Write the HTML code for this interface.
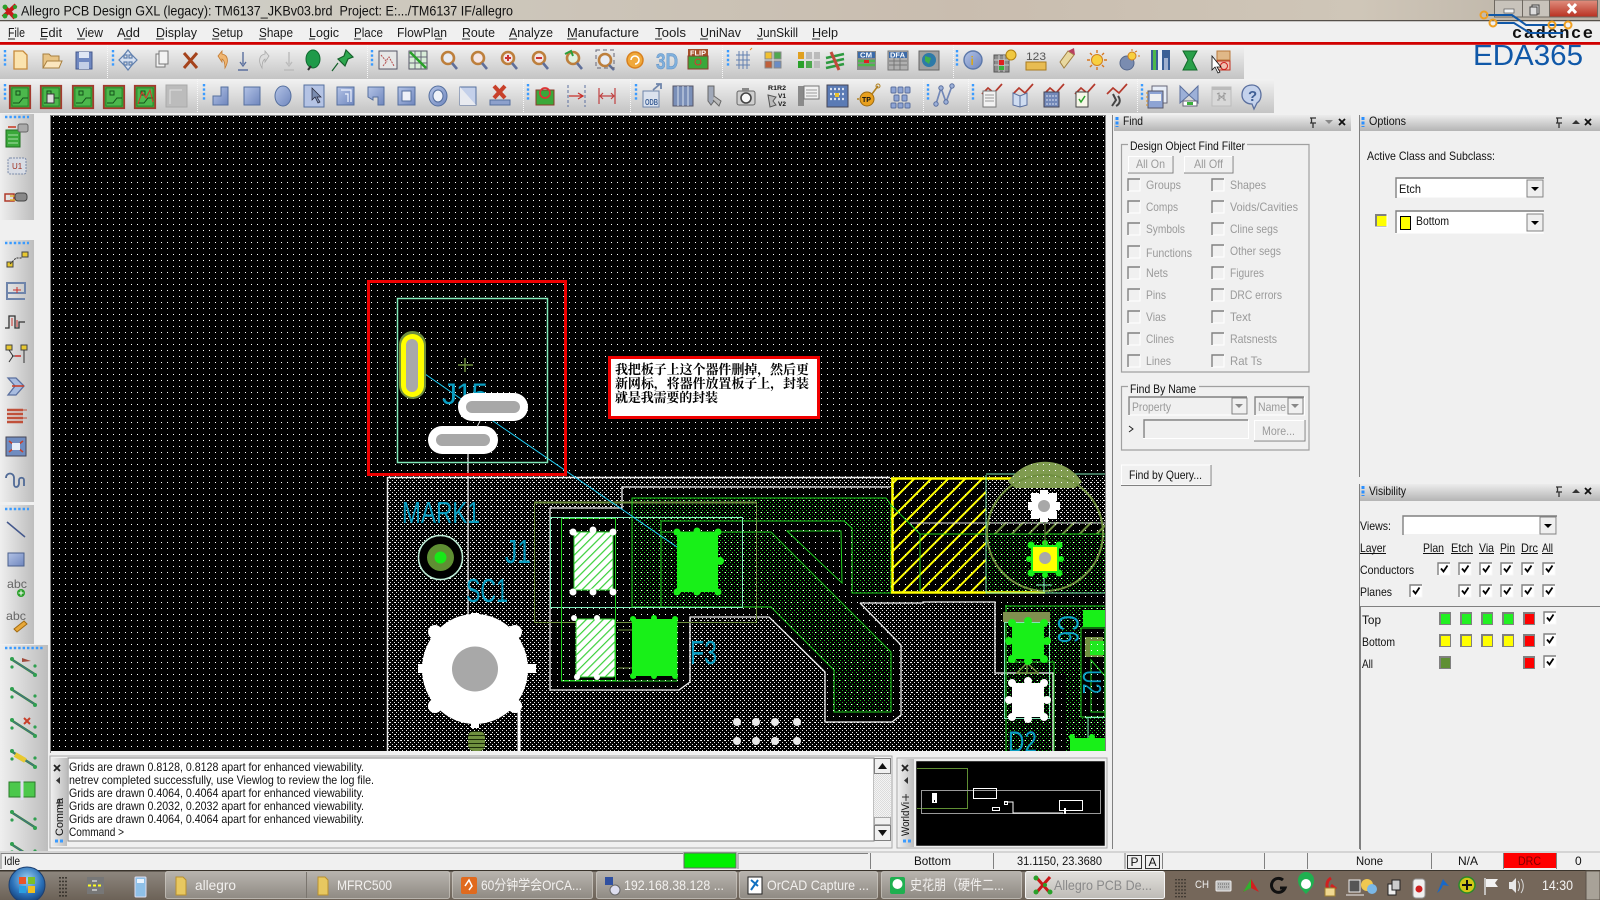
<!DOCTYPE html>
<html lang="en"><head><meta charset="utf-8"><title>Allegro PCB Design GXL</title>
<style>html,body{margin:0;padding:0;background:#f0f0f0;overflow:hidden}svg{display:block}
text{font-family:"Liberation Sans","Noto Sans CJK SC",sans-serif;font-size:12px;fill:#111;white-space:pre}
.d{fill:#9a9a9a}.m{font-size:13px;fill:#1a1a1a}.v{fill:#0a9ec2}.t{font-size:14px;fill:#f2f0ee}</style></head><body>
<svg xmlns="http://www.w3.org/2000/svg" width="1600" height="900" viewBox="0 0 1600 900">
<defs>
<linearGradient id="title" x1="0" x2="1" y1="0" y2="0"><stop offset="0" stop-color="#cfd3d0"/><stop offset=".25" stop-color="#cdc8bd"/><stop offset=".6" stop-color="#c9bdaf"/><stop offset=".85" stop-color="#cfc6b8"/><stop offset="1" stop-color="#b8b0a4"/></linearGradient>
<linearGradient id="tb" x1="0" x2="0" y1="0" y2="1"><stop offset="0" stop-color="#f2f2f2"/><stop offset="1" stop-color="#c4c4c4"/></linearGradient>
<linearGradient id="hd" x1="0" x2="0" y1="0" y2="1"><stop offset="0" stop-color="#ececec"/><stop offset="1" stop-color="#b4b4b4"/></linearGradient>
<linearGradient id="lp" x1="0" x2="1" y1="0" y2="0"><stop offset="0" stop-color="#efefef"/><stop offset="1" stop-color="#bdbdbd"/></linearGradient>
<linearGradient id="bl" x1="0" x2="1" y1="0" y2="1"><stop offset="0" stop-color="#b3c3e6"/><stop offset="1" stop-color="#6f86bd"/></linearGradient>
<linearGradient id="task" x1="0" x2="0" y1="0" y2="1"><stop offset="0" stop-color="#8f8880"/><stop offset="1" stop-color="#6c6257"/></linearGradient>
<linearGradient id="tbtn" x1="0" x2="0" y1="0" y2="1"><stop offset="0" stop-color="#b8b4ae"/><stop offset="1" stop-color="#8f8a83"/></linearGradient>
<linearGradient id="tact" x1="0" x2="0" y1="0" y2="1"><stop offset="0" stop-color="#e2e0dc"/><stop offset="1" stop-color="#bebbb6"/></linearGradient>
<linearGradient id="cl" x1="0" x2="0" y1="0" y2="1"><stop offset="0" stop-color="#e09080"/><stop offset="1" stop-color="#b83020"/></linearGradient>
<radialGradient id="orb" cx=".5" cy=".35" r=".7"><stop offset="0" stop-color="#9fd4f4"/><stop offset=".6" stop-color="#2a70b8"/><stop offset="1" stop-color="#10356a"/></radialGradient>
<pattern id="grid" width="6" height="6" patternUnits="userSpaceOnUse" x="5" y="2"><rect width="1" height="1" fill="#fff"/></pattern>
<pattern id="bd" width="4" height="4" patternUnits="userSpaceOnUse"><rect width="4" height="4" fill="#000"/><rect width="1" height="1" fill="#e8e8e8"/><rect x="2" y="2" width="1" height="1" fill="#e8e8e8"/></pattern>
<pattern id="gd" width="4" height="4" patternUnits="userSpaceOnUse"><rect width="4" height="4" fill="#000"/><rect width="1" height="1" fill="#22bc22"/><rect x="2" y="2" width="1" height="1" fill="#22bc22"/></pattern>
<pattern id="hy" width="12" height="12" patternUnits="userSpaceOnUse" patternTransform="rotate(-45)"><rect width="12" height="12" fill="#000"/><rect width="12" height="2" fill="#ffff00"/></pattern>
<pattern id="ho" width="12" height="12" patternUnits="userSpaceOnUse" patternTransform="rotate(-45)"><rect width="12" height="2" fill="#6f8f3f"/></pattern>
<pattern id="hz" width="4" height="4" patternUnits="userSpaceOnUse"><rect width="4" height="4" fill="#6f8f3f"/><rect y="3" width="4" height="1" fill="#1a2a08"/></pattern>
<pattern id="hg" width="6" height="6" patternUnits="userSpaceOnUse" patternTransform="rotate(-45)"><rect width="6" height="6" fill="#fff"/><rect width="6" height="1.2" fill="#39d039"/></pattern>
<pattern id="sc" width="2" height="2" patternUnits="userSpaceOnUse"><rect width="2" height="2" fill="#f4f4f4"/><rect width="1" height="1" fill="#dcdcdc"/><rect x="1" y="1" width="1" height="1" fill="#dcdcdc"/></pattern>
<symbol id="cbd" width="12" height="12" overflow="visible"><rect width="12" height="12" fill="#f0f0f0" stroke="#fff"/><path d="M0 12V0H12" fill="none" stroke="#808080" stroke-width="1.4"/></symbol>
<symbol id="cb" width="12" height="12" overflow="visible"><rect width="12" height="12" fill="#fff" stroke="#f8f8f8"/><path d="M0 12V0H12" fill="none" stroke="#808080" stroke-width="1.4"/><path d="M3 5.500l2.500 3 4-6" fill="none" stroke="#000" stroke-width="1.800"/></symbol>
<symbol id="dn" width="17" height="18" overflow="visible"><rect width="16" height="17" fill="#efefef" stroke="#808080"/><path d="M4 7h8l-4 4z" fill="#000"/></symbol>
<symbol id="hi" width="40" height="12" overflow="visible"><path d="M3 1h6M4.500 1v5M3 6h6M6 6v5" stroke="#333" stroke-width="1.300" fill="none"/><path d="M19 7h8l-4-4z" fill="#333"/><path d="M32 2l6 6M38 2l-6 6" stroke="#111" stroke-width="1.800"/></symbol>
<symbol id="hf" width="40" height="12" overflow="visible"><path d="M3 1h6M4.500 1v5M3 6h6M6 6v5" stroke="#333" stroke-width="1.300" fill="none"/><path d="M18 3h8l-4 4z" fill="#888"/><path d="M32 2l6 6M38 2l-6 6" stroke="#111" stroke-width="1.800"/></symbol>
<symbol id="pcb" width="22" height="24" overflow="visible"><rect x=".8" y=".8" width="20.400" height="22.400" fill="#3aa83a" stroke="#a33a2e" stroke-width="1.800"/><rect x="3" y="3" width="16" height="18" fill="#4cb84c" stroke="#1f6f1f" stroke-width=".6"/><path d="M4 18h6l4-5h5M7 6h4v4h-4z" stroke="#14501a" fill="none"/></symbol>
<symbol id="cur" width="24" height="26" overflow="visible"><path d="M2 14l6-6 6 5 8-9" fill="none" stroke="#b4392c" stroke-width="1.700"/></symbol>
<symbol id="lw" width="32" height="22" overflow="visible"><path d="M3 4l25 16" stroke="#3a8f3a" stroke-width="2.500"/><path d="M3 4l25 16" stroke="#45679b" stroke-width="1"/><circle cx="4" cy="4" r="2" fill="#2f9f4f"/><circle cx="4" cy="12" r="1.600" fill="#2f9f4f"/><circle cx="27" cy="20" r="2" fill="#2f9f4f"/><circle cx="27" cy="11" r="1.600" fill="#2f9f4f"/></symbol>
</defs>

<rect width="1600" height="900" fill="#f0f0f0"/>

<!-- Title bar -->
<rect width="1600" height="20" fill="url(#title)"/>
<rect y="20" width="1600" height="1.400" fill="#55504a"/>
<rect y="21.400" width="1600" height="1" fill="#fff"/>
<g transform="translate(2,3)"><path d="M1 14L14 2M2 3l11 12" stroke="#c81818" stroke-width="4"/><circle cx="3" cy="4" r="2.400" fill="#2aa02a"/><circle cx="13" cy="13" r="2.400" fill="#2aa02a"/><circle cx="3" cy="13" r="2.400" fill="#2aa02a"/><circle cx="13" cy="4" r="2" fill="#2aa02a"/></g>
<text x="21" y="15.500" textLength="492" lengthAdjust="spacingAndGlyphs" style="font-size:14px">Allegro PCB Design GXL (legacy): TM6137_JKBv03.brd  Project: E:.../TM6137 IF/allegro</text>
<rect x="1494.500" y="0" width="28" height="17" fill="#c8c3bb" stroke="#6e6860"/><rect x="1522.500" y="0" width="27" height="17" fill="#c8c3bb" stroke="#6e6860"/><rect x="1549.500" y="0" width="48" height="17" fill="url(#cl)" stroke="#6e6860"/>
<rect x="1504" y="9" width="10" height="4" fill="#f4f4f4" stroke="#555" stroke-width=".7"/>
<rect x="1532" y="5" width="7" height="9" fill="#ddd" stroke="#444"/><rect x="1530" y="7" width="7" height="8" fill="#ddd" stroke="#444"/>
<path d="M1568 4l8 9M1576 4l-8 9" stroke="#fff" stroke-width="3"/>

<!-- Menu -->
<rect y="22" width="1600" height="20" fill="#f0f0f0"/>
<g>
<text class="m" x="8" y="37" textLength="17" lengthAdjust="spacingAndGlyphs">File</text>
<text class="m" x="40" y="37" textLength="22" lengthAdjust="spacingAndGlyphs">Edit</text>
<text class="m" x="77" y="37" textLength="26" lengthAdjust="spacingAndGlyphs">View</text>
<text class="m" x="117" y="37" textLength="23" lengthAdjust="spacingAndGlyphs">Add</text>
<text class="m" x="156" y="37" textLength="41" lengthAdjust="spacingAndGlyphs">Display</text>
<text class="m" x="212" y="37" textLength="31" lengthAdjust="spacingAndGlyphs">Setup</text>
<text class="m" x="259" y="37" textLength="34" lengthAdjust="spacingAndGlyphs">Shape</text>
<text class="m" x="309" y="37" textLength="30" lengthAdjust="spacingAndGlyphs">Logic</text>
<text class="m" x="354" y="37" textLength="29" lengthAdjust="spacingAndGlyphs">Place</text>
<text class="m" x="397" y="37" textLength="50" lengthAdjust="spacingAndGlyphs">FlowPlan</text>
<text class="m" x="462" y="37" textLength="33" lengthAdjust="spacingAndGlyphs">Route</text>
<text class="m" x="509" y="37" textLength="44" lengthAdjust="spacingAndGlyphs">Analyze</text>
<text class="m" x="567" y="37" textLength="72" lengthAdjust="spacingAndGlyphs">Manufacture</text>
<text class="m" x="655" y="37" textLength="31" lengthAdjust="spacingAndGlyphs">Tools</text>
<text class="m" x="700" y="37" textLength="41" lengthAdjust="spacingAndGlyphs">UniNav</text>
<text class="m" x="757" y="37" textLength="41" lengthAdjust="spacingAndGlyphs">JunSkill</text>
<text class="m" x="812" y="37" textLength="26" lengthAdjust="spacingAndGlyphs">Help</text>
<path d="M8 39h7M40 39h7M77 39h8M124 39h7M156 39h8M212 39h7M259 39h7M309 39h6M354 39h7M435 39h7M462 39h8M509 39h8M567 39h10M655 39h7M700 39h8M757 39h6M812 39h8" stroke="#222"/>
</g>
<rect y="42" width="1600" height="2.800" fill="#d00000"/>

<!-- Toolbars -->
<rect x="0" y="45" width="1244" height="34" fill="url(#tb)"/>
<rect x="0" y="79" width="1274" height="34" fill="url(#tb)"/>
<path d="M107.500 45v34M367.500 45v34M722.500 45v34M953.500 45v34M197.500 79v34M523.500 79v34M630.500 79v34M923.500 79v34M968.500 79v34M1137.500 79v34" stroke="#f8f8f8" stroke-dasharray="1 1"/>
<path d="M5 50v17M113 50v17M372 50v17M728 50v17M957 50v17M5 84v17M204 84v17M528 84v17M636 84v17M928 84v17M973 84v17M1142 84v17" stroke="#3a9bff" stroke-width="2.400" stroke-dasharray="2.400 2"/>

<!-- row 1 icons -->
<path d="M14 51h9l4 4v14H14z" fill="#fbe3ae" stroke="#c68a3c" stroke-width="1.300"/>
<path d="M43 68V54h6l2 2h8v12z" fill="#e8c486" stroke="#a88040"/><path d="M43 68l4-7h15l-3 7z" fill="#fbe6be" stroke="#a88040"/>
<path d="M76 52h16v17H76z" fill="#7088c0" stroke="#44588c"/><rect x="79" y="52" width="10" height="6" fill="#dfe6f4"/><rect x="79" y="62" width="10" height="7" fill="#c4cfe6"/>
<path d="M128 50l4 5h-3v3h3v-3l5 5-5 5v-3h-3v3h3l-4 5-4-5h3v-3h-3v3l-5-5 5-5v3h3v-3h-3z" fill="#d6e0f0" stroke="#5f7fae" stroke-width="1.200"/>
<rect x="156" y="54" width="9" height="13" fill="#f2f2f2" stroke="#777"/><rect x="159" y="51" width="9" height="13" fill="#f2f2f2" stroke="#777"/>
<path d="M184 53l13 15M197 53l-13 15" stroke="#a5431c" stroke-width="3"/>
<path d="M218 56l4-5v3c6 1 7 7 3 14-0-5-1-8-3-9v3z" fill="#f0b672" stroke="#c37a30" stroke-width=".8"/>
<path d="M243 52v12M240 62l3 4 3-4M238 70h10" stroke="#5a6f9e" stroke-width="1.400" fill="none"/>
<path d="M269 56l-4-5v3c-6 1-7 7-3 14 0-5 1-8 3-9v3z" fill="#ddd" stroke="#aaa" stroke-width=".8"/>
<path d="M289 52v12M286 62l3 4 3-4M284 70h10" stroke="#bbb" stroke-width="1.400" fill="none"/>
<ellipse cx="313" cy="59" rx="7" ry="9" fill="#1f9a4a" stroke="#0f6a2f"/><path d="M308 70l3-4" stroke="#333" stroke-width="2"/>
<path d="M346 50l7 7-5 2-3 7-7-7 6-3zM338 63l-6 8" fill="#2ea84f" stroke="#14602a" stroke-width="1.200"/>
<rect x="379" y="51" width="18" height="18" fill="#e6e6e6" stroke="#556"/><path d="M381 55l5 6 3-4 5 9M383 66l4-5" stroke="#b45050" fill="none" stroke-dasharray="2 1"/>
<rect x="409" y="51" width="18" height="18" fill="#d8ecd8" stroke="#556"/><path d="M409 57h18M409 63h18M415 51v18M421 51v18" stroke="#667"/><path d="M410 52l16 16" stroke="#28a028" stroke-width="2.500"/>
<g fill="none" stroke-width="2.600"><circle cx="448" cy="58" r="6" fill="#e8ecf4" stroke="#bd7f3c"/><path d="M452 63l5 6" stroke="#5f6f9a"/><circle cx="478" cy="58" r="6" fill="#f4e6e6" stroke="#bd7f3c"/><path d="M482 63l5 6" stroke="#5f6f9a"/><circle cx="508" cy="58" r="6" fill="#f4e6e6" stroke="#bd7f3c"/><path d="M512 63l5 6" stroke="#5f6f9a"/><circle cx="539" cy="58" r="6" fill="#f4e6e6" stroke="#bd7f3c"/><path d="M543 63l5 6" stroke="#5f6f9a"/><circle cx="573" cy="58" r="6" fill="#dff0df" stroke="#bd7f3c"/><path d="M577 63l5 6" stroke="#5f6f9a"/><circle cx="605" cy="60" r="6" fill="#e8ecf4" stroke="#bd7f3c"/><path d="M609 65l5 5" stroke="#5f6f9a"/></g>
<path d="M505 58h6M508 55v6" stroke="#c33" stroke-width="2"/><path d="M536 58h6" stroke="#c33" stroke-width="2"/><path d="M565 54l6-3 2 5" fill="none" stroke="#2a9f3a" stroke-width="2"/>
<rect x="596" y="50" width="18" height="18" fill="none" stroke="#667" stroke-dasharray="4 3"/>
<circle cx="635" cy="60" r="8" fill="#f0a83a" stroke="#d8801e" stroke-width="1.500"/><path d="M631 60a4 4 0 1 1 4 4" fill="none" stroke="#fff" stroke-width="1.600"/>
<text x="656" y="69" textLength="22" lengthAdjust="spacingAndGlyphs" style="font-size:22px;font-weight:bold;fill:#7fb0dc;stroke:#5f8fc4;stroke-width:.5">3D</text>
<rect x="688" y="49" width="20" height="7" fill="#a5502a"/><text x="690" y="55.500" textLength="16" lengthAdjust="spacingAndGlyphs" style="font-size:7px;font-weight:bold;fill:#fff">FLIP</text><rect x="688" y="56" width="20" height="13" fill="#3aa83a" stroke="#8a3a2a"/><circle cx="698" cy="62" r="3" fill="none" stroke="#d33"/>
<g stroke="#6280b0" fill="none"><path d="M736 55h14M736 60h14M736 65h14M739 51v18M743 51v18M747 51v18"/></g><path d="M750 50l2-2" stroke="#e88a2a"/>
<rect x="765" y="52" width="7" height="7" fill="#f0c030" stroke="#888"/><rect x="774" y="52" width="7" height="7" fill="#4fa84f" stroke="#888"/><rect x="765" y="61" width="7" height="7" fill="#c0603a" stroke="#888"/><rect x="774" y="61" width="7" height="7" fill="#6a8cc4" stroke="#888"/>
<rect x="798" y="52" width="6" height="7" fill="#e0a020"/><rect x="806" y="52" width="6" height="7" fill="#bbb"/><rect x="814" y="52" width="6" height="7" fill="#bbb"/><rect x="798" y="61" width="6" height="7" fill="#2aa02a"/><rect x="806" y="61" width="6" height="7" fill="#4fa84f"/><rect x="814" y="61" width="6" height="7" fill="#bbb"/>
<path d="M826 58l18-4M826 63l18-4M826 68l18-4" stroke="#2d9a3f" stroke-width="2.600"/><path d="M831 52l8 18" stroke="#c14a3a" stroke-width="3"/>
<rect x="857" y="51" width="19" height="19" fill="#8a8a8a"/><rect x="858" y="52" width="17" height="6" fill="#3b6aa8"/><text x="860" y="57.500" textLength="12" lengthAdjust="spacingAndGlyphs" style="font-size:7px;font-weight:bold;fill:#fff">CM</text><path d="M858 61h17M858 65h17" stroke="#4cb84c" stroke-width="2.500"/><rect x="864" y="60" width="5" height="3" fill="#e02020"/>
<rect x="888" y="51" width="20" height="19" fill="#b0b0b0" stroke="#777"/><rect x="889" y="52" width="18" height="6" fill="#3b6aa8"/><text x="890" y="57.500" textLength="15" lengthAdjust="spacingAndGlyphs" style="font-size:7px;font-weight:bold;fill:#fff">DFA</text><path d="M889 61h18M889 65h18M894 58v12M900 58v12" stroke="#777"/>
<rect x="919" y="51" width="20" height="19" fill="#a0a0a0" stroke="#666"/><circle cx="929" cy="60" r="7" fill="#2d7aa8"/><path d="M925 56l6 2-2 6-4-3z" fill="#3fb04a"/>
<circle cx="973" cy="60" r="9" fill="url(#bl)" stroke="#5c78aa" stroke-width="1.400"/><text x="970.500" y="65" style="font-size:12px;font-weight:bold;fill:#d8a820">i</text>
<rect x="994" y="55" width="15" height="17" fill="#8c8c8c" stroke="#555"/><path d="M994 60h15M994 65h15M999 55v17M1004 55v17" stroke="#ccc"/><rect x="999" y="60" width="5" height="5" fill="#e02020"/><rect x="999" y="66" width="5" height="4" fill="#3ab03a"/><circle cx="1011" cy="55" r="5" fill="#f0c840" stroke="#b08010"/>
<text x="1026" y="60" textLength="20" lengthAdjust="spacingAndGlyphs" style="font-size:11px;fill:#555">123</text><rect x="1026" y="62" width="20" height="8" fill="#e8bc52" stroke="#a87a1e"/>
<path d="M1060 62l8-11 6 4-10 13z" fill="#e8d8a0" stroke="#a08040"/><path d="M1068 51l6-3 1 7z" fill="#b84060"/>
<circle cx="1097" cy="60" r="5.500" fill="#f8d040" stroke="#d08020"/><path d="M1097 50v3M1097 67v3M1087 60h3M1104 60h3M1090 53l2 2M1102 65l2 2M1104 53l-2 2M1090 67l2-2" stroke="#d8761e" stroke-width="1.400"/>
<circle cx="1127" cy="63" r="7" fill="#7a8cb0" stroke="#55678c"/><circle cx="1132" cy="56" r="4" fill="#f8d040" stroke="#d08020"/><path d="M1132 49v2M1138 56h2M1137 51l-2 1" stroke="#d8761e"/>
<rect x="1151" y="50" width="19" height="20" fill="#3a5f96"/><rect x="1153" y="50" width="3" height="20" fill="#4cb84c"/><rect x="1158" y="50" width="4" height="20" fill="#e8eef8"/><rect x="1164" y="58" width="4" height="12" fill="#9fb0d0"/>
<path d="M1183 51h14l-5 9 5 10h-14l5-10z" fill="#2a9f4a" stroke="#12682a"/>
<rect x="1217" y="51" width="13" height="9" fill="#e0b888" stroke="#b8783c"/><rect x="1217" y="61" width="13" height="9" fill="#f0c0b0" stroke="#c03020"/><circle cx="1224" cy="66" r="3.500" fill="none" stroke="#d02020"/><path d="M1212 56v14l3-3 3 6 2-1-3-5h4z" fill="#fff" stroke="#111" stroke-width=".8"/>

<!-- row 2 icons -->
<use href="#pcb" x="9" y="85"/><use href="#pcb" x="40" y="85"/><use href="#pcb" x="72" y="85"/><use href="#pcb" x="103" y="85"/><use href="#pcb" x="134" y="85"/>
<rect x="47" y="94" width="7" height="9" fill="#ddd" stroke="#333"/>
<path d="M138 104l4-12 4 6 4-8 3 12" stroke="#d8302a" fill="none"/>
<rect x="166" y="85" width="21" height="22" fill="#bcbcbc" stroke="#aaa"/><path d="M170 104V90h12" stroke="#e0e0e0" fill="none"/>
<g fill="url(#bl)" stroke="#556f9e">
<path d="M213 105V96h8v-9h7v18z"/><rect x="244" y="87" width="16" height="18"/><ellipse cx="283" cy="96" rx="8" ry="10"/>
<rect x="304" y="85" width="20" height="22" fill="#b4c3e4"/>
<rect x="337" y="87" width="17" height="18"/><path d="M368 87h16v18h-6v-8h-5v3l-5-3z"/><rect x="398" y="87" width="17" height="18"/><ellipse cx="438" cy="96" rx="9" ry="10"/>
<path d="M460 87h16v18h-16z" fill="#c4d0ea"/><path d="M460 87l16 18h-16z" fill="#e8eaf0" stroke="none"/></g>
<path d="M312 88v12l3-3 3 6 2-1-3-5h4z" fill="#7a8cb0" stroke="#223" stroke-width=".7"/>
<path d="M341 90h10v12M345 94h3v8" fill="none" stroke="#f0f4ff" stroke-width="1.200"/>
<rect x="402" y="91" width="9" height="10" fill="#eef1f8" stroke="#556f9e"/><ellipse cx="438" cy="96" rx="5" ry="6" fill="#eef1f8" stroke="#556f9e"/>
<rect x="490" y="100" width="20" height="5" fill="#8da0cc" stroke="#556f9e"/><path d="M494 86l11 12M505 86l-11 12" stroke="#c8402a" stroke-width="4"/>
<rect x="536" y="90" width="18" height="15" fill="#3aa83a" stroke="#8a3a2a"/><circle cx="545" cy="93" r="5" fill="none" stroke="#d33" stroke-width="1.800"/>
<path d="M568 85v22" stroke="#5a6f9e" stroke-dasharray="3 2"/><path d="M569 96h14M578 93l5 3-5 3" stroke="#c8302a" fill="none" stroke-width="1.300"/><path d="M585 85v22" stroke="#5a6f9e" stroke-dasharray="3 2"/>
<path d="M599 88v16M615 88v16M600 96h14M603 93l-3 3 3 3M611 93l3 3-3 3" stroke="#c04040" fill="none" stroke-width="1.200"/>
<rect x="643" y="91" width="16" height="16" fill="#dbe2ee" stroke="#6f85ab"/><text x="645" y="105" textLength="13" lengthAdjust="spacingAndGlyphs" style="font-size:8px;font-weight:bold;fill:#3b5f96">ODB</text><path d="M653 90l7-6M656 84h5v5" stroke="#6f85ab" stroke-width="1.800" fill="none"/>
<rect x="673" y="86" width="20" height="20" fill="#7a8fb8" stroke="#556"/><path d="M678 86v20M683 86v20M688 86v20" stroke="#d8e0ee"/>
<path d="M708 86v15l3 4 3-4V86z" fill="#a0a8b8" stroke="#666"/><path d="M714 96l7 5-2 5-6-6" fill="#bbb" stroke="#666"/>
<rect x="737" y="91" width="18" height="14" rx="2" fill="#cfcfcf" stroke="#666"/><circle cx="746" cy="98" r="5" fill="#f8f8f8" stroke="#444" stroke-width="1.600"/><rect x="742" y="88" width="7" height="3" fill="#888"/>
<text x="768" y="90" textLength="18" lengthAdjust="spacingAndGlyphs" style="font-size:6.500px;font-weight:bold">R1R2</text><text x="778" y="98" style="font-size:6.500px;font-weight:bold">V1</text><text x="778" y="106" style="font-size:6.500px;font-weight:bold">V2</text><path d="M768 95l8 2-3 4 3 4-6 2z" fill="#bbb" stroke="#555"/>
<rect x="798" y="86" width="6" height="20" fill="#8a8a8a"/><rect x="804" y="86" width="15" height="13" fill="#f2f2f2" stroke="#777"/><path d="M806 90h11M806 93h11M806 96h11" stroke="#999"/>
<rect x="827" y="85" width="21" height="22" fill="#5b7bb5" stroke="#445"/><path d="M830 89h2M834 89h2M838 89h2M842 89h2M830 94h2M834 94h2M838 94h2M842 94h2M830 99h2M834 99h2M838 99h2M842 99h2" stroke="#d8e0f0" stroke-width="2.200"/><rect x="835" y="93" width="4" height="4" fill="#e8c030"/>
<circle cx="867" cy="99" r="7" fill="#e8a01e" stroke="#9c6a10"/><text x="862" y="102" style="font-size:7px;font-weight:bold">TP</text><path d="M872 94l6-8M859 99h-2" stroke="#b08020" stroke-width="1.500"/><circle cx="878" cy="86" r="2" fill="none" stroke="#b08020"/>
<g fill="#8ea4d4" stroke="#5a6f9e"><rect x="891" y="87" width="5" height="6" rx="1"/><rect x="898" y="87" width="5" height="6" rx="1"/><rect x="905" y="87" width="5" height="6" rx="1"/><rect x="894" y="95" width="5" height="6" rx="1"/><rect x="902" y="95" width="5" height="6" rx="1"/><rect x="891" y="103" width="5" height="5" rx="1"/><rect x="898" y="103" width="5" height="5" rx="1"/><rect x="905" y="103" width="5" height="5" rx="1"/></g>
<path d="M936 104l5-16 5 14 6-16" fill="none" stroke="#7288b8" stroke-width="1.700"/><g fill="#9cb0d8" stroke="#5a6f9e"><circle cx="936" cy="104" r="2.200"/><circle cx="941" cy="88" r="2.200"/><circle cx="946" cy="102" r="2.200"/><circle cx="952" cy="86" r="2.200"/></g>
<use href="#cur" x="980" y="80"/><rect x="983" y="91" width="13" height="16" fill="#f2f2f2" stroke="#777"/><path d="M985 95h9M985 98h9M985 101h9" stroke="#999"/>
<use href="#cur" x="1011" y="80"/><path d="M1013 93l7 3 7-3v12l-7 2-7-2z" fill="#cfdcf0" stroke="#5a6f9e"/><path d="M1020 96v11" stroke="#5a6f9e"/>
<use href="#cur" x="1042" y="80"/><rect x="1044" y="92" width="15" height="15" fill="#7288b8" stroke="#445"/><path d="M1046 96h11M1046 100h11M1046 104h11" stroke="#d8e0f0" stroke-dasharray="2 1"/>
<use href="#cur" x="1073" y="80"/><rect x="1076" y="92" width="12" height="15" fill="#f6f6e8" stroke="#444"/><path d="M1079 99l2 3 4-6" stroke="#2aa02a" fill="none" stroke-width="1.500"/>
<use href="#cur" x="1105" y="80"/><path d="M1113 94l3 6-4 6M1118 96c3 4 2 8-2 10" stroke="#444" stroke-width="2" fill="none"/>
<rect x="1152" y="86" width="15" height="17" fill="#e8eef8" stroke="#667"/><rect x="1148" y="91" width="15" height="17" fill="#8ea4d4" stroke="#556"/><rect x="1150" y="94" width="11" height="7" fill="#f0f0f0"/><path d="M1148 93h-2M1148 97h-2M1148 101h-2M1148 105h-2" stroke="#d89020"/>
<path d="M1180 86l9 9 9-9v17l-9-8-9 8z" fill="#9cb0d8" stroke="#5a6f9e"/><rect x="1183" y="101" width="14" height="5" fill="#fff" stroke="#667"/><rect x="1187" y="102" width="6" height="3" fill="#3ab03a"/>
<rect x="1212" y="87" width="19" height="19" fill="#d8d8d8" stroke="#bbb"/><rect x="1212" y="87" width="19" height="3" fill="#bbb"/><path d="M1217 94l2-1v7h-2M1226 94l-2-1v7h2M1219 95l5 4M1224 95l-5 4" stroke="#999" fill="none"/>
<path d="M1252 85c-8 0-10 6-10 10s3 9 10 9l2 5 3-6c3-2 4-5 4-8 0-5-3-10-9-10z" fill="#c4d2ec" stroke="#5a6f9e" stroke-width="1.300"/><text x="1248" y="101" style="font-size:15px;font-weight:bold;fill:#3f5f96">?</text>

<!-- cadence logo -->
<text x="1512" y="38" textLength="81" lengthAdjust="spacing" style="font-size:17px;font-weight:bold;font-family:'Liberation Mono',monospace;fill:#111">cadence</text>
<path d="M1486 15h26l14 10h39M1496 23h18l16 10h33" fill="none" stroke="#1058a8" stroke-width="2"/>
<g fill="none" stroke="#f0a020" stroke-width="2"><circle cx="1484" cy="15" r="3.500"/><circle cx="1493" cy="23" r="3.500"/><circle cx="1552" cy="25" r="3.500"/><circle cx="1568" cy="25" r="3.500"/></g>
<text x="1473" y="65" textLength="110" lengthAdjust="spacingAndGlyphs" style="font-size:29px;fill:#1058a8">EDA365</text>

<!-- left toolstrip panels -->
<rect x="0" y="114" width="34" height="106" fill="url(#lp)"/><rect x="0" y="240" width="34" height="262" fill="url(#lp)"/><rect x="0" y="505" width="34" height="139" fill="url(#lp)"/><rect x="0" y="645" width="48" height="207" fill="url(#lp)"/>
<path d="M5 117h24M5 243h24M5 509h24M5 648h38" stroke="#3a9bff" stroke-width="2.400" stroke-dasharray="2.400 2"/>
<!-- panel 1 -->
<rect x="6" y="130" width="14" height="17" fill="#3aa83a" stroke="#1f6f1f"/><path d="M8 135h10M8 139h10M8 143h10" stroke="#a8e0a8"/><rect x="18" y="124" width="10" height="8" rx="2" fill="#aaa" stroke="#666"/><path d="M8 127h8" stroke="#c8402a" stroke-width="1.600"/>
<rect x="8" y="158" width="18" height="16" rx="2" fill="#d8dce4" stroke="#7a8aa8" stroke-dasharray="2 1"/><text x="12" y="169" style="font-size:8px;fill:#a03020">U1</text>
<rect x="5" y="194" width="9" height="7" fill="none" stroke="#b03a2a" stroke-width="1.500"/><path d="M10 196h6M10 200h6" stroke="#e0b030" stroke-width="1.500"/><rect x="15" y="193" width="12" height="8" rx="3" fill="#888" stroke="#444"/>
<!-- panel 2 -->
<rect x="7" y="262" width="6" height="5" fill="#e8c830" stroke="#444"/><rect x="22" y="252" width="6" height="5" fill="#e8c830" stroke="#444"/><path d="M10 264l6-6h6" stroke="#333" stroke-dasharray="2 1" fill="none"/>
<path d="M7 283h18v10H7zM7 283v16h18" fill="none" stroke="#6f85ab" stroke-width="2"/><path d="M13 290h8M17 287v6" stroke="#c8302a"/>
<path d="M5 328h4v-12h6v12h4v-6h6" fill="none" stroke="#333" stroke-width="1.300"/><path d="M12 326v-8M17 320v7" stroke="#c8302a"/>
<rect x="6" y="345" width="6" height="5" fill="#e8c830" stroke="#444"/><rect x="21" y="345" width="6" height="5" fill="#e8c830" stroke="#444"/><path d="M9 350l4 6-4 6M12 356h9M24 350v13" stroke="#333" fill="none"/><path d="M15 356h6" stroke="#c8302a" stroke-width="1.500"/>
<path d="M8 378h8l8 8-8 9H8l7-9z" fill="#a8bce0" stroke="#5a6f9e" stroke-width="1.300"/><path d="M12 386h12" stroke="#c8402a" stroke-width="1.600"/>
<path d="M7 410h16M7 414h16M7 418h16M7 422h16" stroke="#c0503a" stroke-width="2.400"/><path d="M23 410h4M23 418h4" stroke="#c0503a"/>
<rect x="6" y="437" width="20" height="19" fill="#6f8cc0" stroke="#445"/><path d="M9 441l14 11M23 441l-14 11" stroke="#c8402a" stroke-width="1.600"/><rect x="12" y="443" width="8" height="7" fill="#e8eef8"/>
<path d="M6 478c0-6 8-6 8 0v6c0 4 4 4 5 0v-4c0-3 5-3 5 0v6" fill="none" stroke="#506a96" stroke-width="1.800"/>
<!-- panel 3 -->
<path d="M7 522l18 15" stroke="#44588c" stroke-width="1.500"/>
<rect x="8" y="553" width="16" height="13" fill="url(#bl)" stroke="#4a5f8c"/>
<text x="7" y="588" textLength="20" lengthAdjust="spacingAndGlyphs" style="font-size:12px;fill:#666">abc</text><circle cx="21" cy="593" r="4" fill="#2aa02a"/><path d="M18.500 593h5M21 590.500v5" stroke="#fff"/>
<text x="6" y="620" textLength="20" lengthAdjust="spacingAndGlyphs" style="font-size:12px;fill:#666">abc</text><path d="M14 629l10-8 3 3-10 8z" fill="#e8a83a" stroke="#a06a10"/>
<!-- panel 4 -->
<use href="#lw" x="8" y="655"/><path d="M22 658l9 3-9 1z" fill="#a04a3a"/><use href="#lw" x="8" y="685"/><use href="#lw" x="8" y="716"/><path d="M24 718l6 6M30 718l-6 6" stroke="#c8402a" stroke-width="2"/><use href="#lw" x="8" y="747"/><rect x="14" y="755" width="12" height="5" fill="#e8c830" transform="rotate(30 20 758)"/>
<rect x="9" y="782" width="26" height="15" fill="#4cc84c" stroke="#2a7a2a"/><path d="M22 780v20" stroke="#dde" stroke-width="3"/><use href="#lw" x="8" y="808"/><use href="#lw" x="8" y="840"/>

<!-- canvas -->
<rect x="50" y="115" width="1056" height="638" fill="#808080"/>
<rect x="51" y="116" width="1054" height="635" fill="#000"/>
<g shape-rendering="crispEdges">
<rect x="388" y="478" width="717" height="273" fill="url(#bd)"/>
<!-- black clearance -->
<polygon points="550,508 622,508 622,487 891,487 891,594 860,603 901,645 901,715 892,722 825,722 825,672 769,617 690,617 690,682 679,690 550,690" fill="#000"/>
<rect x="860" y="594" width="245" height="9" fill="#000"/>
<polygon points="996,603 1105,603 1105,751 1053,751 1053,673 996,673" fill="#000"/>
<rect x="1006" y="605" width="99" height="146" fill="url(#gd)"/>
<rect x="1054" y="673" width="11" height="78" fill="#000"/>
</g>
<!-- copper regions -->
<polygon points="632,498 886,498 891,505 891,593 852,593 852,528 844,521 661,521 661,607 632,607" fill="url(#gd)" stroke="#1fd01f"/>
<polygon points="661,532 771,532 891,652 891,712 834,712 834,670 771,607 661,607" fill="url(#gd)" stroke="#1fd01f"/>
<polygon points="787,531 841,531 842,583" fill="#000" stroke="#1fd01f"/>
<!-- yellow hatch + right area -->
<rect x="891" y="479" width="95" height="114" fill="url(#hy)"/>
<rect x="986" y="488" width="119" height="105" fill="url(#gd)"/>
<rect x="986" y="478" width="119" height="44" fill="url(#bd)"/>
<rect x="986" y="524" width="119" height="9" fill="#000"/><rect x="986" y="522" width="119" height="12" fill="url(#ho)"/>
<path d="M892.500 479v114M891 478.500h160M891 592.500h154" stroke="#ffff00" stroke-width="2.500" fill="none"/>
<path d="M910 523h195" stroke="#e0e0e0"/><path d="M920 534h185M920 534v58M891 505l29 29" stroke="#1fd01f" fill="none"/>
<path d="M986 475v118h119" fill="none" stroke="#7fe8b8"/><path d="M986 474h119" stroke="#7fe8b8"/>
<path d="M1008 482A44 44 0 0 1 1082 482L1075 488H1015Z" fill="#7f9b4f"/>
<circle cx="1045" cy="533" r="58" fill="none" stroke="#6f8f3f" stroke-width="2"/>
<!-- outlines -->
<path d="M387.500 477V751M387.500 477.500H890" stroke="#e8e8e8" fill="none" stroke-width="1.500"/>
<path d="M550 691V508h72v-21h268M860 603l41 42v70l-9 7h-67v-50l-56-55h-79v65l-11 8H550" fill="none" stroke="#f0f0f0" stroke-width="1.300"/>
<path d="M860 603h63v-1h72v71h58v78" fill="none" stroke="#f0f0f0" stroke-width="1.300"/>
<rect x="534.500" y="502.500" width="222" height="120" fill="none" stroke="#6f8f3f"/><path d="M534 502.500h223" stroke="#6f8f3f" stroke-width="2"/>
<rect x="550.500" y="517.500" width="192" height="90" fill="none" stroke="#7fe8b8"/>
<rect x="561.500" y="518.500" width="54" height="162" fill="none" stroke="#1fd01f"/><path d="M561 681h116v-64M632 498v110" fill="none" stroke="#1fd01f"/>
<path d="M618 630h14M618 668h14" stroke="#6f8f3f"/>
<rect x="1005" y="605.500" width="100" height="1" fill="#1fd01f"/><path d="M1006 605v146" stroke="#1fd01f"/>
<rect x="1004.500" y="622.500" width="45" height="96" fill="none" stroke="#7fe8b8"/>
<path d="M1006 662h48v89" stroke="#1fd01f" fill="none"/>
<rect x="1081" y="628" width="24" height="89" fill="#000" stroke="#1fd01f"/><path d="M1091 660l14 16v36h-14z" fill="none" stroke="#1fd01f"/>
<rect x="1085" y="637" width="18" height="20" fill="#6f8f3f"/><rect x="1090" y="641" width="14" height="14" fill="#1fe81f"/>
<rect x="1085" y="717" width="20" height="1" fill="#7fe8b8"/><path d="M1088 718v30" stroke="#7fe8b8"/>
<!-- grid overlay -->
<rect x="51" y="116" width="1054" height="635" fill="url(#grid)" shape-rendering="crispEdges"/>
<path d="M1017 673l10-10 11 10zM1027 663v10" fill="none" stroke="#6f8f3f" stroke-width="1.500"/>
<rect x="1003" y="612" width="47" height="10" fill="#7f8f4f"/>

<!-- cyan rat line -->
<path d="M412 365l81 56 203 139" fill="none" stroke="#1cc8f0"/>
<path d="M468 454V620" stroke="#f0f0f0" stroke-width="1.200"/>
<!-- J15 symbol -->
<rect x="397.500" y="298.500" width="150" height="164" fill="none" stroke="#7fe8b8" stroke-width="1.500"/>
<rect x="399" y="331" width="27" height="68" rx="13.500" fill="#6f8f3f"/><rect x="401" y="334" width="23" height="63" rx="11.500" fill="#ffff00"/><rect x="406" y="339" width="12" height="53" rx="6" fill="#a8a8a8"/>
<path d="M465 358v14M458 365h15" stroke="#6f8f3f" stroke-width="1.500"/>
<text class="v" x="442" y="404" textLength="46" lengthAdjust="spacing" style="font-size:30px">J15</text>
<rect x="458" y="393" width="70" height="28" rx="14" fill="#fff"/><rect x="466" y="401" width="54" height="12" rx="6" fill="#a8a8a8"/>
<rect x="428" y="426" width="70" height="28" rx="14" fill="#fff"/><rect x="436" y="434" width="54" height="12" rx="6" fill="#a8a8a8"/>
<path d="M480 421l-3 6" stroke="#ddd"/>
<rect x="368.500" y="281.500" width="197" height="193" fill="none" stroke="#f00000" stroke-width="3"/>
<!-- callout -->
<rect x="609.500" y="357.500" width="209" height="60" fill="#fff" stroke="#f00000" stroke-width="3"/>
<text x="615" y="374" textLength="194" lengthAdjust="spacing" style="font-size:13px;font-weight:bold;fill:#000;font-family:'Noto Serif CJK SC','Noto Sans CJK SC',serif">我把板子上这个器件删掉，然后更</text>
<text x="615" y="388" textLength="194" lengthAdjust="spacing" style="font-size:13px;font-weight:bold;fill:#000;font-family:'Noto Serif CJK SC','Noto Sans CJK SC',serif">新网标，将器件放置板子上，封装</text>
<text x="615" y="402" textLength="103" lengthAdjust="spacing" style="font-size:13px;font-weight:bold;fill:#000;font-family:'Noto Serif CJK SC','Noto Sans CJK SC',serif">就是我需要的封装</text>
<!-- board text -->
<text class="v" x="402" y="523" textLength="78" lengthAdjust="spacingAndGlyphs" style="font-size:31px">MARK1</text>
<text class="v" x="505" y="563" textLength="26" lengthAdjust="spacingAndGlyphs" style="font-size:33px">J1</text>
<text class="v" x="466" y="602" textLength="42" lengthAdjust="spacingAndGlyphs" style="font-size:33px">SC1</text>
<text class="v" x="690" y="664" textLength="27" lengthAdjust="spacingAndGlyphs" style="font-size:33px">F3</text>
<text class="v" x="1008" y="752" textLength="29" lengthAdjust="spacingAndGlyphs" style="font-size:30px">D2</text>
<text class="v" transform="translate(1058,615) rotate(90)" textLength="28" lengthAdjust="spacingAndGlyphs" style="font-size:30px">C6</text>
<text class="v" transform="translate(1083,670) rotate(90)" textLength="24" lengthAdjust="spacingAndGlyphs" style="font-size:26px">U2</text>
<!-- Mark via -->
<circle cx="440.500" cy="557.500" r="22" fill="#000" stroke="#bfeed8" stroke-width="1.500"/><circle cx="440.500" cy="557.500" r="13.500" fill="#5f8f33"/><circle cx="440.500" cy="557.500" r="6" fill="#18e818"/>
<!-- SC1 hub -->
<ellipse cx="475" cy="669" rx="53" ry="55" fill="#fff"/>
<g fill="#fff"><rect x="471" y="613" width="8" height="10"/><rect x="471" y="716" width="8" height="12"/><rect x="418" y="664" width="10" height="9"/><rect x="526" y="664" width="10" height="9"/><circle cx="435" cy="632" r="7"/><circle cx="515" cy="632" r="7"/><circle cx="435" cy="706" r="7"/><circle cx="515" cy="706" r="7"/></g>
<ellipse cx="475" cy="669" rx="23" ry="22.500" fill="#a8a8a8"/>
<rect x="517.500" y="710" width="3" height="41" fill="#fff"/>
<rect x="468" y="731" width="17" height="20" rx="6" fill="url(#hz)"/>
<!-- dots -->
<g fill="#e8e8e8"><circle cx="737" cy="722" r="4"/><circle cx="756" cy="722" r="4"/><circle cx="775" cy="722" r="4"/><circle cx="797" cy="722" r="4"/><circle cx="737" cy="741" r="4"/><circle cx="756" cy="741" r="4"/><circle cx="775" cy="741" r="4"/><circle cx="797" cy="741" r="4"/></g>
<!-- hatch & solid pads -->
<g fill="url(#hg)" stroke="#2ad02a"><rect x="574" y="532" width="39" height="58" rx="2"/><rect x="576" y="619" width="39" height="58" rx="2"/></g>
<g fill="#fff"><circle cx="573" cy="532" r="3.500"/><circle cx="593" cy="530" r="3.500"/><circle cx="613" cy="532" r="3.500"/><circle cx="573" cy="592" r="3.500"/><circle cx="593" cy="592" r="3.500"/><circle cx="613" cy="592" r="3.500"/><circle cx="574" cy="618" r="3"/><circle cx="597" cy="618" r="3"/><circle cx="597" cy="677" r="3"/><circle cx="577" cy="677" r="3"/></g>
<g fill="#18f018"><rect x="677" y="532" width="41" height="60"/><circle cx="677" cy="532" r="3.500"/><circle cx="697" cy="531" r="3.500"/><circle cx="718" cy="532" r="3.500"/><circle cx="677" cy="592" r="3.500"/><circle cx="697" cy="592" r="3.500"/><circle cx="718" cy="592" r="3.500"/><circle cx="720" cy="561" r="4"/><rect x="632" y="619" width="45" height="57"/><circle cx="633" cy="619" r="3"/><circle cx="654" cy="618" r="3"/><circle cx="675" cy="619" r="3"/><circle cx="633" cy="676" r="3"/><circle cx="654" cy="676" r="3"/><circle cx="675" cy="676" r="3"/>
<rect x="1012" y="623" width="32" height="36"/><circle cx="1012" cy="623" r="4"/><circle cx="1044" cy="623" r="4"/><circle cx="1012" cy="659" r="4"/><circle cx="1044" cy="659" r="4"/><circle cx="1028" cy="621" r="4"/><circle cx="1028" cy="661" r="4"/><circle cx="1009" cy="641" r="4"/><circle cx="1047" cy="641" r="4"/>
<rect x="1083" y="610" width="22" height="17"/><rect x="1070" y="738" width="35" height="13"/><circle cx="1072" cy="737" r="3"/><circle cx="1092" cy="737" r="3"/>
<rect x="1031" y="545" width="28" height="28"/><circle cx="1031" cy="545" r="3.500"/><circle cx="1059" cy="545" r="3.500"/><circle cx="1031" cy="573" r="3.500"/><circle cx="1059" cy="573" r="3.500"/><circle cx="1045" cy="543" r="3"/><circle cx="1045" cy="575" r="3"/><circle cx="1029" cy="559" r="3"/><circle cx="1061" cy="559" r="3"/></g>
<rect x="1033" y="547" width="24" height="24" fill="#ffff00"/><circle cx="1045" cy="558" r="6" fill="#a8a8a8"/>
<path d="M1036 585h16M1044 578v14" stroke="#7fe8b8"/>
<path d="M1045 523v22" stroke="#6f8f3f"/>
<g fill="#fff"><circle cx="1044" cy="506" r="13"/><rect x="1040" y="490" width="8" height="32"/><rect x="1028" y="502" width="32" height="8"/><rect x="1031" y="493" width="8" height="8"/><rect x="1049" y="493" width="8" height="8"/><rect x="1031" y="511" width="8" height="8"/><rect x="1049" y="511" width="8" height="8"/></g><circle cx="1044" cy="506" r="6" fill="#a8a8a8"/>
<g fill="#fff"><rect x="1012" y="683" width="32" height="34"/><circle cx="1012" cy="683" r="4"/><circle cx="1044" cy="683" r="4"/><circle cx="1012" cy="717" r="4"/><circle cx="1044" cy="717" r="4"/><circle cx="1028" cy="681" r="4"/><circle cx="1028" cy="719" r="4"/><circle cx="1009" cy="700" r="4"/><circle cx="1047" cy="700" r="4"/></g>
<rect x="632" y="618" width="4" height="60" fill="#18f018"/>
<rect x="51" y="751" width="1055" height="3" fill="#f0f0f0"/>

<!-- Command window -->
<rect x="50" y="756" width="842" height="92" fill="#f0f0f0" stroke="#a8a8a8"/>
<rect x="51" y="758" width="16" height="88" fill="url(#lp)"/>
<rect x="68" y="758" width="806" height="83" fill="#fff" stroke="#808080"/>
<path d="M54 765l6 6M60 765l-6 6" stroke="#222" stroke-width="1.800"/><path d="M60 777v7l-4-3.500z" fill="#333"/>
<text transform="translate(63,836) rotate(-90)" textLength="38" lengthAdjust="spacingAndGlyphs" style="font-size:11px">Comma</text><path d="M56 803h7M59 800v7" stroke="#333"/>
<path d="M55 841h3M60 841h3" stroke="#3a9bff" stroke-width="3"/>
<text x="69" y="771" textLength="295" lengthAdjust="spacingAndGlyphs">Grids are drawn 0.8128, 0.8128 apart for enhanced viewability.</text>
<text x="69" y="784" textLength="305" lengthAdjust="spacingAndGlyphs">netrev completed successfully, use Viewlog to review the log file.</text>
<text x="69" y="797" textLength="295" lengthAdjust="spacingAndGlyphs">Grids are drawn 0.4064, 0.4064 apart for enhanced viewability.</text>
<text x="69" y="810" textLength="295" lengthAdjust="spacingAndGlyphs">Grids are drawn 0.2032, 0.2032 apart for enhanced viewability.</text>
<text x="69" y="823" textLength="295" lengthAdjust="spacingAndGlyphs">Grids are drawn 0.4064, 0.4064 apart for enhanced viewability.</text>
<text x="69" y="836" textLength="55" lengthAdjust="spacingAndGlyphs">Command &gt;</text>
<rect x="874" y="758" width="17" height="83" fill="url(#sc)"/>
<rect x="874.500" y="758.500" width="16" height="15" fill="#f0f0f0" stroke="#808080"/><path d="M878 769h9l-4.500-6z" fill="#111"/>
<rect x="874.500" y="817.500" width="16" height="7" fill="#f0f0f0" stroke="#a8a8a8"/>
<rect x="874.500" y="825.500" width="16" height="15" fill="#f0f0f0" stroke="#808080"/><path d="M878 830h9l-4.500 6z" fill="#111"/>

<!-- World view -->
<rect x="897" y="758" width="210" height="90" fill="#f0f0f0" stroke="#a8a8a8"/>
<rect x="898" y="759" width="16" height="88" fill="url(#lp)"/>
<path d="M902 765l6 6M908 765l-6 6" stroke="#222" stroke-width="1.800"/><path d="M908 777v7l-4-3.500z" fill="#333"/>
<text transform="translate(909,836) rotate(-90)" textLength="34" lengthAdjust="spacingAndGlyphs" style="font-size:11px">WorldVi</text><path d="M902 797h7M906 794v7" stroke="#333"/>
<path d="M903 841h3M908 841h3" stroke="#3a9bff" stroke-width="3"/>
<rect x="915.500" y="760.500" width="190" height="86" fill="#000" stroke="#eee" stroke-width="1.500"/>
<path d="M917 768.500h50.500v40H917" fill="none" stroke="#5f8f33"/>
<rect x="921.500" y="790.500" width="179" height="23" fill="none" stroke="#9a9a9a"/>
<rect x="973.500" y="788.500" width="23" height="10" fill="none" stroke="#fff"/>
<rect x="932" y="793" width="5" height="10" fill="#fff"/><rect x="934" y="800" width="1" height="2" fill="#000"/>
<rect x="992.500" y="807.500" width="7" height="3" fill="none" stroke="#fff"/>
<path d="M1005 802h8v11h50" fill="none" stroke="#fff"/><rect x="1004.500" y="801.500" width="3" height="3" fill="none" stroke="#fff"/>
<rect x="1059.500" y="800.500" width="23" height="10" fill="none" stroke="#fff"/><rect x="1064" y="808" width="2" height="6" fill="#fff"/>

<!-- right panels -->
<path d="M1112.500 115V849M1359.500 115V477M1359.500 484V849" stroke="#808080"/>
<rect x="1114" y="115" width="237" height="16" fill="url(#hd)"/><rect x="1360" y="115" width="240" height="16" fill="url(#hd)"/><rect x="1360" y="484" width="240" height="17" fill="url(#hd)"/>
<path d="M1117 117v10M1363 117v10M1363 486v10" stroke="#2a8fff" stroke-width="3" stroke-dasharray="3 1.500"/>
<text x="1123" y="125" textLength="20" lengthAdjust="spacingAndGlyphs">Find</text>
<text x="1369" y="125" textLength="37" lengthAdjust="spacingAndGlyphs">Options</text>
<text x="1369" y="495" textLength="37" lengthAdjust="spacingAndGlyphs">Visibility</text>
<use href="#hf" x="1307" y="117"/>
<use href="#hi" x="1553" y="117"/><use href="#hi" x="1553" y="486"/>

<!-- Find group -->
<path d="M1128 144.500h-6.500v227.500h187.500V144.500H1247" fill="none" stroke="#a0a0a0" stroke-width="1.200"/>
<text x="1130" y="150" textLength="115" lengthAdjust="spacingAndGlyphs">Design Object Find Filter</text>
<rect x="1128.500" y="156.500" width="44" height="16" fill="#f0f0f0" stroke="#fff"/><path d="M1128 173h45V156" fill="none" stroke="#808080"/>
<rect x="1184.500" y="156.500" width="48" height="16" fill="#f0f0f0" stroke="#fff"/><path d="M1184 173h49V156" fill="none" stroke="#808080"/>
<text class="d" x="1136" y="168" textLength="29" lengthAdjust="spacingAndGlyphs">All On</text>
<text class="d" x="1194" y="168" textLength="29" lengthAdjust="spacingAndGlyphs">All Off</text>
<use href="#cbd" x="1128" y="179"/><use href="#cbd" x="1128" y="201"/><use href="#cbd" x="1128" y="223"/><use href="#cbd" x="1128" y="246"/><use href="#cbd" x="1128" y="267"/><use href="#cbd" x="1128" y="289"/><use href="#cbd" x="1128" y="311"/><use href="#cbd" x="1128" y="333"/><use href="#cbd" x="1128" y="355"/>
<use href="#cbd" x="1212" y="179"/><use href="#cbd" x="1212" y="201"/><use href="#cbd" x="1212" y="223"/><use href="#cbd" x="1212" y="245"/><use href="#cbd" x="1212" y="267"/><use href="#cbd" x="1212" y="289"/><use href="#cbd" x="1212" y="311"/><use href="#cbd" x="1212" y="333"/><use href="#cbd" x="1212" y="355"/>
<text class="d" x="1146" y="189" textLength="35" lengthAdjust="spacingAndGlyphs">Groups</text>
<text class="d" x="1146" y="211" textLength="32" lengthAdjust="spacingAndGlyphs">Comps</text>
<text class="d" x="1146" y="233" textLength="39" lengthAdjust="spacingAndGlyphs">Symbols</text>
<text class="d" x="1146" y="257" textLength="46" lengthAdjust="spacingAndGlyphs">Functions</text>
<text class="d" x="1146" y="277" textLength="22" lengthAdjust="spacingAndGlyphs">Nets</text>
<text class="d" x="1146" y="299" textLength="20" lengthAdjust="spacingAndGlyphs">Pins</text>
<text class="d" x="1146" y="321" textLength="20" lengthAdjust="spacingAndGlyphs">Vias</text>
<text class="d" x="1146" y="343" textLength="28" lengthAdjust="spacingAndGlyphs">Clines</text>
<text class="d" x="1146" y="365" textLength="25" lengthAdjust="spacingAndGlyphs">Lines</text>
<text class="d" x="1230" y="189" textLength="36" lengthAdjust="spacingAndGlyphs">Shapes</text>
<text class="d" x="1230" y="211" textLength="68" lengthAdjust="spacingAndGlyphs">Voids/Cavities</text>
<text class="d" x="1230" y="233" textLength="48" lengthAdjust="spacingAndGlyphs">Cline segs</text>
<text class="d" x="1230" y="255" textLength="51" lengthAdjust="spacingAndGlyphs">Other segs</text>
<text class="d" x="1230" y="277" textLength="34" lengthAdjust="spacingAndGlyphs">Figures</text>
<text class="d" x="1230" y="299" textLength="52" lengthAdjust="spacingAndGlyphs">DRC errors</text>
<text class="d" x="1230" y="321" textLength="21" lengthAdjust="spacingAndGlyphs">Text</text>
<text class="d" x="1230" y="343" textLength="47" lengthAdjust="spacingAndGlyphs">Ratsnests</text>
<text class="d" x="1230" y="365" textLength="32" lengthAdjust="spacingAndGlyphs">Rat Ts</text>

<!-- Find By Name -->
<path d="M1128 386.500h-6.500v63.500h187.500V386.500H1199" fill="none" stroke="#a0a0a0" stroke-width="1.200"/>
<text x="1130" y="393" textLength="66" lengthAdjust="spacingAndGlyphs">Find By Name</text>
<rect x="1128.500" y="397" width="119" height="18" fill="#f0f0f0" stroke="#fff"/><path d="M1129 415v-18h118" fill="none" stroke="#808080" stroke-width="1.400"/>
<rect x="1232" y="398" width="15" height="16" fill="#f0f0f0" stroke="#808080"/><path d="M1235 404h8l-4 4z" fill="#888"/>
<text class="d" x="1132" y="411" textLength="39" lengthAdjust="spacingAndGlyphs">Property</text>
<rect x="1254.500" y="397" width="50" height="18" fill="#f0f0f0" stroke="#fff"/><path d="M1255 415v-18h49" fill="none" stroke="#808080" stroke-width="1.400"/>
<rect x="1288" y="398" width="15" height="16" fill="#f0f0f0" stroke="#808080"/><path d="M1291 404h8l-4 4z" fill="#888"/>
<text class="d" x="1258" y="411" textLength="28" lengthAdjust="spacingAndGlyphs">Name</text>
<path d="M1129 426l4 3-4 3" fill="none" stroke="#222"/>
<rect x="1143.500" y="420.500" width="105" height="18" fill="#f0f0f0" stroke="#fff"/><path d="M1144 438v-18h104" fill="none" stroke="#808080" stroke-width="1.400"/>
<rect x="1254.500" y="420.500" width="50" height="20" fill="#f0f0f0" stroke="#fff"/><path d="M1254 441h51v-21" fill="none" stroke="#808080"/>
<text class="d" x="1262" y="435" textLength="33" lengthAdjust="spacingAndGlyphs">More...</text>
<rect x="1121.500" y="465" width="89" height="20" fill="#f0f0f0" stroke="#fff"/><path d="M1121 485.500h90V465" fill="none" stroke="#808080"/>
<text x="1129" y="479" textLength="73" lengthAdjust="spacingAndGlyphs">Find by Query...</text>

<!-- Options -->
<text x="1367" y="160" textLength="128" lengthAdjust="spacingAndGlyphs">Active Class and Subclass:</text>
<rect x="1395.500" y="178.500" width="148" height="19" fill="#fff" stroke="#f8f8f8"/><path d="M1396 198v-20h148" fill="none" stroke="#808080" stroke-width="1.400"/><use href="#dn" x="1527" y="180"/>
<text x="1399" y="193" textLength="22" lengthAdjust="spacingAndGlyphs">Etch</text>
<rect x="1375" y="214" width="12" height="13" fill="#808080"/><rect x="1377" y="216" width="10" height="10" fill="#ffff00"/><path d="M1387 214v13h-12" stroke="#fff" fill="none"/>
<rect x="1395.500" y="211.500" width="148" height="22" fill="#fff" stroke="#f8f8f8"/><path d="M1396 233v-22h148" fill="none" stroke="#808080" stroke-width="1.400"/><use href="#dn" x="1527" y="214"/>
<rect x="1400.500" y="216.500" width="10" height="13" fill="#ffff00" stroke="#000"/>
<text x="1416" y="225" textLength="33" lengthAdjust="spacingAndGlyphs">Bottom</text>

<!-- Visibility -->
<text x="1360" y="530" textLength="31" lengthAdjust="spacingAndGlyphs">Views:</text>
<rect x="1403" y="516" width="154" height="18" fill="#fff"/><path d="M1403 535v-19h154" fill="none" stroke="#808080" stroke-width="1.400"/><use href="#dn" x="1540" y="517"/>
<g>
<text x="1360" y="552" textLength="26" lengthAdjust="spacingAndGlyphs">Layer</text>
<text x="1423" y="552" textLength="21" lengthAdjust="spacingAndGlyphs">Plan</text>
<text x="1451" y="552" textLength="22" lengthAdjust="spacingAndGlyphs">Etch</text>
<text x="1479" y="552" textLength="15" lengthAdjust="spacingAndGlyphs">Via</text>
<text x="1500" y="552" textLength="15" lengthAdjust="spacingAndGlyphs">Pin</text>
<text x="1521" y="552" textLength="17" lengthAdjust="spacingAndGlyphs">Drc</text>
<text x="1542" y="552" textLength="11" lengthAdjust="spacingAndGlyphs">All</text>
<path d="M1360 553.500h26M1423 553.500h21M1451 553.500h22M1479 553.500h15M1500 553.500h15M1521 553.500h17M1542 553.500h11" stroke="#111"/>
</g>
<text x="1360" y="574" textLength="54" lengthAdjust="spacingAndGlyphs">Conductors</text>
<text x="1360" y="596" textLength="32" lengthAdjust="spacingAndGlyphs">Planes</text>
<use href="#cb" x="1438" y="563"/><use href="#cb" x="1459" y="563"/><use href="#cb" x="1480" y="563"/><use href="#cb" x="1501" y="563"/><use href="#cb" x="1522" y="563"/><use href="#cb" x="1543" y="563"/>
<use href="#cb" x="1410" y="585"/><use href="#cb" x="1459" y="585"/><use href="#cb" x="1480" y="585"/><use href="#cb" x="1501" y="585"/><use href="#cb" x="1522" y="585"/><use href="#cb" x="1543" y="585"/>
<path d="M1360.500 850V606.500H1600" fill="none" stroke="#808080"/>
<text x="1362" y="624" textLength="19" lengthAdjust="spacingAndGlyphs">Top</text>
<text x="1362" y="646" textLength="33" lengthAdjust="spacingAndGlyphs">Bottom</text>
<text x="1362" y="668" textLength="11" lengthAdjust="spacingAndGlyphs">All</text>
<g fill="#808080"><rect x="1439" y="612" width="12" height="13"/><rect x="1460" y="612" width="12" height="13"/><rect x="1481" y="612" width="12" height="13"/><rect x="1502" y="612" width="12" height="13"/><rect x="1523" y="612" width="12" height="13"/><rect x="1439" y="634" width="12" height="13"/><rect x="1460" y="634" width="12" height="13"/><rect x="1481" y="634" width="12" height="13"/><rect x="1502" y="634" width="12" height="13"/><rect x="1523" y="634" width="12" height="13"/><rect x="1439" y="656" width="12" height="13"/><rect x="1523" y="656" width="12" height="13"/></g>
<g fill="#22f022"><rect x="1441" y="614" width="9" height="10"/><rect x="1462" y="614" width="9" height="10"/><rect x="1483" y="614" width="9" height="10"/><rect x="1504" y="614" width="9" height="10"/></g>
<g fill="#ffff00"><rect x="1441" y="636" width="9" height="10"/><rect x="1462" y="636" width="9" height="10"/><rect x="1483" y="636" width="9" height="10"/><rect x="1504" y="636" width="9" height="10"/></g>
<g fill="#ff0000"><rect x="1525" y="614" width="9" height="10"/><rect x="1525" y="636" width="9" height="10"/><rect x="1525" y="658" width="9" height="10"/></g>
<rect x="1441" y="658" width="9" height="10" fill="#5f8f33"/>
<use href="#cb" x="1544" y="612"/><use href="#cb" x="1544" y="634"/><use href="#cb" x="1544" y="656"/>

<!-- Status bar -->
<rect y="851" width="1600" height="19" fill="#f0f0f0"/>
<path d="M0 852h1600" stroke="#b8b8b8"/>
<path d="M1 869V853.500H683M738 869V853.500H868M870.500 869V853M993.500 869V853M1125 869V853M1162.500 869V853M1264.500 869V853M1307.500 869V853M1431.500 869V853M1503.500 869V853M1556.500 869V853" fill="none" stroke="#808080"/>
<rect x="684" y="853" width="52" height="15" fill="#00f000" stroke="#666"/>
<text x="4" y="865" textLength="16" lengthAdjust="spacingAndGlyphs">Idle</text>
<text x="914" y="865" textLength="37" lengthAdjust="spacingAndGlyphs">Bottom</text>
<text x="1017" y="865" textLength="85" lengthAdjust="spacingAndGlyphs">31.1150, 23.3680</text>
<rect x="1127.500" y="855.500" width="14" height="13" fill="#f0f0f0" stroke="#333"/><rect x="1145.500" y="855.500" width="14" height="13" fill="#f0f0f0" stroke="#333"/>
<text x="1130.500" y="866">P</text><text x="1148.500" y="866">A</text>
<text x="1356" y="865" textLength="27" lengthAdjust="spacingAndGlyphs">None</text>
<text x="1458" y="865" textLength="20" lengthAdjust="spacingAndGlyphs">N/A</text>
<rect x="1504" y="853" width="52" height="15" fill="#ff0000"/>
<text x="1518" y="865" textLength="23" lengthAdjust="spacingAndGlyphs" style="fill:#800000">DRC</text>
<text x="1575" y="865">0</text>

<!-- Taskbar -->
<rect y="870" width="1600" height="30" fill="url(#task)"/>
<rect y="870" width="1600" height="1.500" fill="#3a342c"/>
<rect x="1164" y="871" width="422" height="29" fill="#75675a"/>
<rect x="1586" y="871" width="14" height="29" fill="#a8a298" stroke="#5a5249"/>
<circle cx="27" cy="885" r="18" fill="url(#orb)" stroke="#1d3f70"/>
<rect x="19" y="877" width="7" height="7" fill="#e8542a"/><rect x="28" y="877" width="7" height="7" fill="#7cc02a"/><rect x="19" y="886" width="7" height="7" fill="#2a9fe0"/><rect x="28" y="886" width="7" height="7" fill="#f0c020"/>
<path d="M60 877v21M63 877v21M66 877v21" stroke="#2e2a24" stroke-width="1.600" stroke-dasharray="1.600 2"/>
<rect x="87" y="877" width="17" height="17" fill="#777"/><path d="M88 885.500h15" stroke="#ffff20" stroke-width="2" stroke-dasharray="3 2"/><path d="M92 881h5M92 890h5" stroke="#fff"/>
<rect x="135" y="877" width="11" height="20" rx="1" fill="#8ec0e8" stroke="#dde"/><rect x="137" y="879" width="7" height="4" fill="#eaf4ff"/>
<g fill="url(#tbtn)" stroke="#e0dcd6" stroke-opacity=".6"><rect x="165.500" y="871.500" width="284" height="27" rx="2"/><rect x="452.500" y="871.500" width="140" height="27" rx="2"/><rect x="596.500" y="871.500" width="140" height="27" rx="2"/><rect x="739.500" y="871.500" width="138" height="27" rx="2"/><rect x="881.500" y="871.500" width="140" height="27" rx="2"/></g>
<rect x="1025.500" y="871.500" width="139" height="27" rx="2" fill="url(#tact)" stroke="#f4f4f4"/>
<path d="M306.500 872v26" stroke="#7a756e"/>
<path d="M176 877h7l3 3v15h-10z" fill="#e8c860" stroke="#b89030"/><path d="M318 877h7l3 3v15h-10z" fill="#e8c860" stroke="#b89030"/>
<rect x="461" y="877" width="16" height="17" rx="2" fill="#e06a1e"/><path d="M465 886l4-6 3 6-3 4" fill="none" stroke="#fff" stroke-width="1.500"/>
<rect x="605" y="877" width="8" height="8" fill="#3050a0"/><circle cx="615" cy="890" r="5" fill="#dde" stroke="#666"/>
<rect x="748" y="877" width="14" height="17" fill="#fff" stroke="#222"/><path d="M751 880l7 6M758 880l-7 10" stroke="#1070c0" stroke-width="2"/>
<rect x="890" y="877" width="15" height="17" rx="2" fill="#1fb050"/><circle cx="897.500" cy="884" r="5" fill="#fff"/>
<path d="M1036 877l14 16M1050 877l-14 16" stroke="#c81818" stroke-width="3"/><g fill="#2aa02a"><circle cx="1036" cy="878" r="2.500"/><circle cx="1050" cy="892" r="2.500"/><circle cx="1036" cy="892" r="2.500"/><circle cx="1045" cy="885" r="2"/></g>
<text class="t" x="195" y="890" textLength="41" lengthAdjust="spacingAndGlyphs">allegro</text>
<text class="t" x="337" y="890" textLength="55" lengthAdjust="spacingAndGlyphs">MFRC500</text>
<text class="t" x="481" y="890" textLength="101" lengthAdjust="spacingAndGlyphs">60分钟学会OrCA...</text>
<text class="t" x="624" y="890" textLength="100" lengthAdjust="spacingAndGlyphs">192.168.38.128 ...</text>
<text class="t" x="767" y="890" textLength="102" lengthAdjust="spacingAndGlyphs">OrCAD Capture ...</text>
<text class="t" x="910" y="890" textLength="94" lengthAdjust="spacingAndGlyphs">史花朋（硬件二...</text>
<text class="t" x="1054" y="890" textLength="98" lengthAdjust="spacingAndGlyphs" style="fill:#8a8a8a">Allegro PCB De...</text>
<path d="M1176 879v19M1179 879v19M1182 879v19M1185 879v19" stroke="#2e2a24" stroke-width="1.400" stroke-dasharray="1.400 2"/>
<text x="1195" y="888" textLength="14" lengthAdjust="spacingAndGlyphs" style="font-size:11px;fill:#eee">CH</text>
<rect x="1216" y="881" width="15" height="10" rx="1" fill="#bbb" stroke="#eee"/><path d="M1218 884h11M1218 887h11" stroke="#666" stroke-dasharray="1 1"/>
<path d="M1243 892l8-13 8 13-8-4z" fill="#d02020"/><path d="M1243 892l8-4v-9z" fill="#30b030"/>
<path d="M1283 880a7 7 0 1 0 2 8h-5" fill="none" stroke="#111" stroke-width="3"/>
<path d="M1298 880a8 8 0 0 1 16 0c0 6-4 10-8 14-4-4-8-8-8-14z" fill="#1fb050"/><circle cx="1306" cy="884" r="5" fill="#fff"/>
<path d="M1331 878c-5 3-5 9-2 13M1331 885l5 4" stroke="#d02020" stroke-width="3" fill="none"/><rect x="1325" y="888" width="10" height="8" fill="#f0d890" stroke="#a08030"/>
<rect x="1349" y="880" width="11" height="12" fill="#555" stroke="#eee"/><path d="M1346 895h18" stroke="#eee"/>
<circle cx="1367" cy="885" r="6" fill="#f0c850"/><circle cx="1372" cy="889" r="5" fill="#7ab8e8"/>
<rect x="1388" y="884" width="8" height="11" fill="#eee" stroke="#222"/><rect x="1392" y="880" width="8" height="10" fill="#ccc" stroke="#222"/>
<rect x="1413" y="879" width="12" height="19" rx="3" fill="#f0f0f0" stroke="#999"/><circle cx="1419" cy="889" r="3.500" fill="#d02020"/>
<path d="M1437 893c3-6 4-10 6-14 2 3 4 5 6 7l-6-1c-1 3-3 6-6 8z" fill="#1868c8"/>
<circle cx="1467" cy="885" r="8" fill="#d0c818" stroke="#2a8a2a" stroke-width="1.500"/><path d="M1462 885h10M1467 880v10" stroke="#111" stroke-width="2"/>
<path d="M1485 878v17" stroke="#ddd" stroke-width="1.500"/><path d="M1486 879h12l-3 4 3 4h-12z" fill="#f2f2f2"/>
<path d="M1509 882h3l4-4v15l-4-4h-3z" fill="#e8e8e8"/><path d="M1518 881c2 3 2 7 0 10M1521 879c3 4 3 10 0 14" stroke="#ddd" fill="none"/>
<text x="1542" y="890" textLength="31" lengthAdjust="spacingAndGlyphs" style="font-size:14px;fill:#f4f4f4">14:30</text>
</svg>
</body></html>
